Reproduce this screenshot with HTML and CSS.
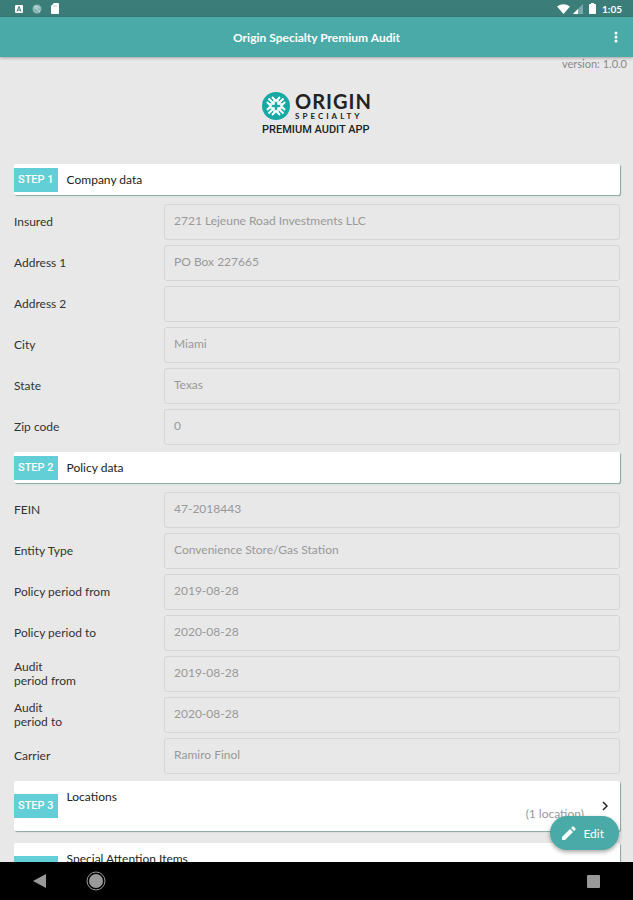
FILE: index.html
```html
<!DOCTYPE html>
<html lang="en">
<head>
  <meta charset="utf-8">
  <meta name="viewport" content="width=device-width, initial-scale=1">
  <title>Origin Specialty Premium Audit</title>
  <link rel="stylesheet" href="styles.css">
</head>
<body>
  <div class="status-bar">
    <div class="status-icons">
      <svg width="10" height="10" viewBox="0 0 10 10"><rect x="1" y="1" width="8" height="8" rx="1" fill="#fff"/><path d="M3 7.5L5 2.5L7 7.5M4 6H6" stroke="#3b7d79" fill="none"/></svg>
      <svg width="10" height="10" viewBox="0 0 10 10"><circle cx="5" cy="5" r="4.5" fill="#8ab8b5"/><path d="M2 3Q5 1 7.500 4M3 4Q5 3 6 6L8 8" stroke="#c9dfdd" fill="none"/></svg>
      <svg width="10" height="11" viewBox="0 0 10 11"><path d="M4 0H8Q9 0 9 1V10Q9 11 8 11H2Q1 11 1 10V3Z" fill="#fff"/><path d="M4 2V4M6 2V4" stroke="#b5d0ce"/></svg>
    </div>
    <div class="status-right">
      <svg width="13" height="10" viewBox="0 0 13 10"><path d="M0 2.500Q6.500 -2 13 2.500L6.500 10Z" fill="#fff"/></svg>
      <svg width="11" height="10" viewBox="0 0 11 10"><path d="M11 0V10H1Z" fill="#78aaa7"/><path d="M6 5V10H1Z" fill="#fff"/></svg>
      <svg class="battery" width="7" height="11" viewBox="0 0 7 11"><path d="M2 0H5V1H6Q7 1 7 2V10Q7 11 6 11H1Q0 11 0 10V2Q0 1 1 1H2Z" fill="#fff"/></svg>
      <span>1:05</span>
    </div>
  </div>

  <header class="app-bar">
    <h1 class="app-title">Origin Specialty Premium Audit</h1>
    <button class="menu-button" aria-label="More options">
      <svg width="4" height="12" viewBox="0 0 4 12" fill="#fff"><circle cx="2" cy="2" r="1.500"/><circle cx="2" cy="6" r="1.500"/><circle cx="2" cy="10" r="1.500"/></svg>
    </button>
  </header>

  <main class="content">
    <div class="version">version: 1.0.0</div>

    <div class="brand">
      <div class="brand-row">
        <svg width="28" height="28" viewBox="0 0 28 28">
          <circle cx="14" cy="14" r="14" fill="#18a9a4"/>
          <g stroke="#fff" stroke-width="2" fill="none">
            <path d="M6.500 6.500L12 12M16 16L21.500 21.500M21.500 6.500L16 12M12 16L6.500 21.500"/>
            <path d="M10 5L14 9L18 5M10 23L14 19L18 23M5 10L9 14L5 18M23 10L19 14L23 18"/>
            <path d="M12 8V12H8M16 8V12H20M12 20V16H8M16 20V16H20" stroke-width="1.500"/>
          </g>
        </svg>
        <div>
          <div class="brand-name">ORIGIN</div>
          <div class="brand-sub">SPECIALTY</div>
        </div>
      </div>
      <div class="brand-app">PREMIUM AUDIT APP</div>
    </div>

    <h2 class="card">
      <span class="step">STEP 1</span>
      <span>Company data</span>
    </h2>
    <form class="fields">
      <div class="field"><label for="insured">Insured</label><input id="insured" value="2721 Lejeune Road Investments LLC" readonly></div>
      <div class="field"><label for="address1">Address 1</label><input id="address1" value="PO Box 227665" readonly></div>
      <div class="field"><label for="address2">Address 2</label><input id="address2" value="" readonly></div>
      <div class="field"><label for="city">City</label><input id="city" value="Miami" readonly></div>
      <div class="field"><label for="state">State</label><input id="state" value="Texas" readonly></div>
      <div class="field"><label for="zip">Zip code</label><input id="zip" value="0" readonly></div>
    </form>

    <h2 class="card">
      <span class="step">STEP 2</span>
      <span>Policy data</span>
    </h2>
    <form class="fields">
      <div class="field"><label for="fein">FEIN</label><input id="fein" value="47-2018443" readonly></div>
      <div class="field"><label for="entity">Entity Type</label><input id="entity" value="Convenience Store/Gas Station" readonly></div>
      <div class="field"><label for="policy-from">Policy period from</label><input id="policy-from" value="2019-08-28" readonly></div>
      <div class="field"><label for="policy-to">Policy period to</label><input id="policy-to" value="2020-08-28" readonly></div>
      <div class="field"><label for="audit-from">Audit<br>period from</label><input id="audit-from" value="2019-08-28" readonly></div>
      <div class="field"><label for="audit-to">Audit<br>period to</label><input id="audit-to" value="2020-08-28" readonly></div>
      <div class="field"><label for="carrier">Carrier</label><input id="carrier" value="Ramiro Finol" readonly></div>
    </form>

    <button class="card card-link">
      <span class="step">STEP 3</span>
      <span class="card-title">Locations</span>
      <span class="card-count">(1 location)</span>
      <svg width="6" height="10" viewBox="0 0 6 10"><path d="M1 1L5 5L1 9" stroke="#222" stroke-width="1.500" fill="none"/></svg>
    </button>
    <button class="card card-link">
      <span class="step">STEP 4</span>
      <span class="card-title">Special Attention Items</span>
    </button>

    <button class="edit-button">
      <svg width="14" height="14" viewBox="0 0 14 14" fill="#fff"><path d="M0 11V14H3L11 6L8 3ZM9 2L12 5L13.500 3.500Q14 3 13.500 2.500L11.500 0.500Q11 0 10.500 0.500Z"/></svg>
      <span>Edit</span>
    </button>
  </main>

  <nav class="nav-bar">
    <button aria-label="Back"><svg width="14" height="14" viewBox="0 0 14 14"><path d="M13 0V14L0 7Z" fill="#999"/></svg></button>
    <button class="nav-home" aria-label="Home"><svg width="20" height="20" viewBox="0 0 20 20"><circle cx="10" cy="10" r="9" fill="none" stroke="#999"/><circle cx="10" cy="10" r="7" fill="#999"/></svg></button>
    <button class="nav-recent" aria-label="Recent apps"><svg width="13" height="13" viewBox="0 0 13 13"><rect width="13" height="13" rx="1" fill="#999"/></svg></button>
  </nav>
</body>
</html>
```
FILE: styles.css
```css
* {
  margin: 0;
  padding: 0;
  box-sizing: border-box;
}

body {
  height: 100vh;
  display: flex;
  flex-direction: column;
  overflow: hidden;
  font-family: Lato, sans-serif;
  font-size: 12px;
  color: #333;
  background: #e8e8e8;
}

button {
  border: none;
  background: none;
  font: inherit;
  color: inherit;
  cursor: pointer;
}

svg {
  display: block;
  flex: none;
}

.status-bar {
  flex: none;
  height: 17px;
  padding: 0 11px 0 14px;
  display: flex;
  align-items: center;
  justify-content: space-between;
  background: #3b7d79;
  color: #fff;
  font-size: 10px;
  font-weight: bold;
}

.status-icons {
  display: flex;
  align-items: center;
  gap: 8px;
}

.status-right {
  display: flex;
  align-items: center;
  gap: 2px;
}

.battery {
  margin: 0 4px;
}

.app-bar {
  flex: none;
  height: 40px;
  padding: 0 12px;
  display: grid;
  grid-template-columns: 1fr auto 1fr;
  align-items: center;
  background: #4aaaa8;
  color: #fff;
  box-shadow: 0 1px 3px rgba(0, 0, 0, 0.3);
  z-index: 1;
}

.app-title {
  grid-column: 2;
  font-size: 12px;
  font-weight: bold;
}

.menu-button {
  justify-self: end;
  padding: 4px 3px;
}

.content {
  flex: 1;
  min-height: 0;
  position: relative;
  overflow: hidden;
  padding: 0 13px 0 14px;
}

.version {
  margin-right: -7px;
  line-height: 13px;
  font-size: 11px;
  text-align: right;
  color: #888;
}

.brand {
  width: max-content;
  margin: 21px auto 27px;
  color: #222;
  font-family: Roboto, sans-serif;
}

.brand-row {
  display: flex;
  align-items: center;
  gap: 5px;
}

.brand-name {
  font-family: Lato, sans-serif;
  font-size: 20px;
  font-weight: bold;
  line-height: 20px;
  letter-spacing: 1px;
}

.brand-sub {
  font-family: Lato, sans-serif;
  font-size: 8px;
  font-weight: bold;
  line-height: 10px;
  letter-spacing: 3px;
}

.brand-app {
  margin-top: 2px;
  font-size: 11px;
  font-weight: 500;
  line-height: 14px;
}

.card {
  width: 100%;
  min-height: 31px;
  display: flex;
  align-items: center;
  gap: 9px;
  background: #fff;
  border-radius: 2px;
  box-shadow: 1px 1px 1px #8aa5a2;
  font-size: 12px;
  font-weight: normal;
  color: #222;
}

.step {
  padding: 0 4px;
  line-height: 24px;
  background: #62ced6;
  color: #fff;
  font-family: Roboto, sans-serif;
  font-size: 11px;
  font-weight: 500;
}

.fields {
  display: grid;
  gap: 5px;
  padding: 9px 0 7px;
}

.field {
  display: grid;
  grid-template-columns: 150px 1fr;
  align-items: center;
}

.field label {
  font-size: 12px;
  line-height: 14px;
}

.field input {
  width: 100%;
  height: 36px;
  padding: 0 9px 4px;
  border: 1px solid #d5d5d5;
  border-radius: 3px;
  background: transparent;
  font: inherit;
  color: #999;
  outline: none;
}

.card-link {
  height: 50px;
  margin-bottom: 12px;
  padding-right: 12px;
  text-align: left;
}

.card-title {
  flex: 1;
  align-self: flex-start;
  padding-top: 8px;
}

.card-count {
  align-self: flex-end;
  padding: 0 9px 10px 0;
  color: #999;
}

.edit-button {
  position: absolute;
  right: 14px;
  bottom: 12px;
  height: 34px;
  padding: 0 15px 0 12px;
  display: flex;
  align-items: center;
  gap: 7px;
  border-radius: 17px;
  background: #4aaaa8;
  color: #fff;
  font-size: 12px;
  box-shadow: 0 2px 4px rgba(0, 0, 0, 0.35);
}

.nav-bar {
  flex: none;
  height: 38px;
  padding: 0 33px;
  display: flex;
  align-items: center;
  background: #000;
}

.nav-home {
  margin-left: 39px;
}

.nav-recent {
  margin-left: auto;
}
```
